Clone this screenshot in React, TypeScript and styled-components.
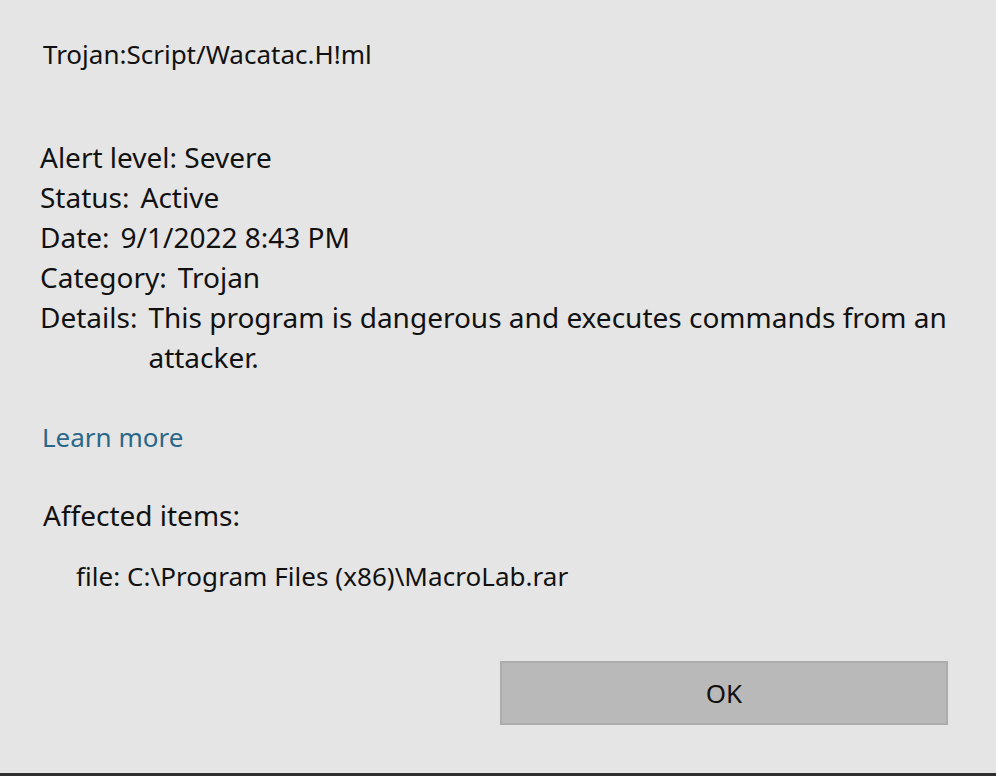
import React from "react";
import styled, { createGlobalStyle } from "styled-components";

const Global = createGlobalStyle`
  html, body { margin: 0; padding: 0; }
  body {
    background: #e5e5e5;
    font-family: "Noto Sans", "Open Sans", sans-serif;
    color: #111;
  }
`;

const Dialog = styled.div`
  width: 996px;
  height: 776px;
  box-sizing: border-box;
  background: #e5e5e5;
  border-bottom: 3px solid #2e2e2e;
  display: flex;
  flex-direction: column;
  padding: 36px 48px 0 40px;
`;

const Title = styled.div`
  font-size: 26px;
  line-height: 36px;
  margin-left: 3px;
`;

const Fields = styled.div`
  margin-top: 65px;
  display: flex;
  flex-direction: column;
  font-size: 28px;
  line-height: 40px;
`;

const Field = styled.div`
  display: flex;
  gap: 11px;
`;

const Label = styled.span`
  flex: none;
`;

const Value = styled.span`
  flex: 1;
  max-width: 830px;
`;

const Link = styled.a`
  margin-top: 40px;
  margin-left: 2px;
  font-size: 26px;
  line-height: 40px;
  color: #2a6889;
  text-decoration: none;
  cursor: pointer;
`;

const Section = styled.div`
  margin-top: 38px;
  margin-left: 3px;
  font-size: 28px;
  line-height: 40px;
`;

const Item = styled.div`
  margin-top: 21px;
  margin-left: 36px;
  font-size: 26px;
  line-height: 40px;
  letter-spacing: 0.05px;
`;

const Footer = styled.div`
  margin-top: auto;
  margin-bottom: 48px;
  display: flex;
  justify-content: flex-end;
`;

const OkButton = styled.button`
  width: 448px;
  height: 64px;
  box-sizing: border-box;
  background: #b9b9b9;
  border: 2px solid #acacac;
  font-family: inherit;
  font-size: 26px;
  color: #111;
  padding: 0;
  cursor: pointer;
`;

export default function App() {
  return (
    <>
      <Global />
      <Dialog>
        <Title>Trojan:Script/Wacatac.H!ml</Title>
        <Fields>
          <Field>
            <Label>Alert level: Severe</Label>
          </Field>
          <Field>
            <Label>Status:</Label>
            <Value>Active</Value>
          </Field>
          <Field>
            <Label>Date:</Label>
            <Value>9/1/2022 8:43 PM</Value>
          </Field>
          <Field>
            <Label>Category:</Label>
            <Value>Trojan</Value>
          </Field>
          <Field>
            <Label>Details:</Label>
            <Value>This program is dangerous and executes commands from an attacker.</Value>
          </Field>
        </Fields>
        <Link>Learn more</Link>
        <Section>Affected items:</Section>
        <Item>file: C:\Program Files (x86)\MacroLab.rar</Item>
        <Footer>
          <OkButton>OK</OkButton>
        </Footer>
      </Dialog>
    </>
  );
}
